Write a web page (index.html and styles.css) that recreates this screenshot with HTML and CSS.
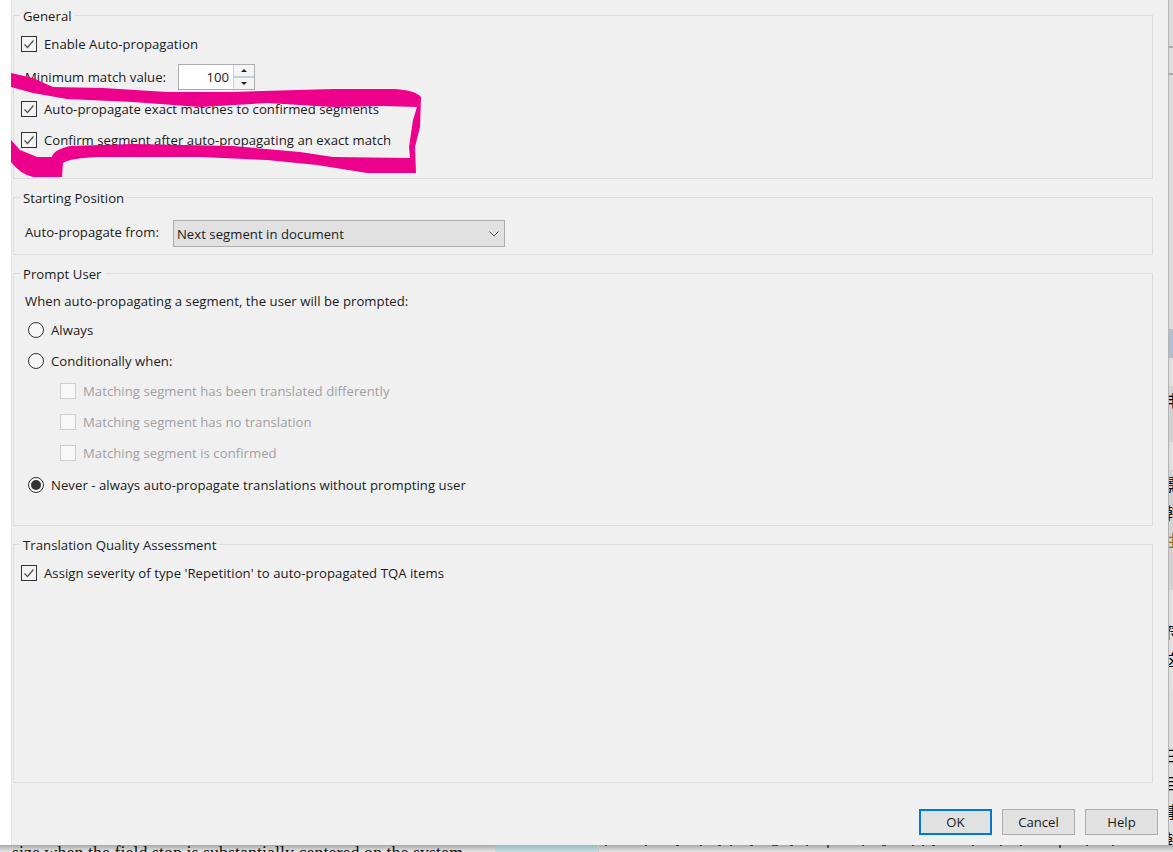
FILE: index.html
```html
<!DOCTYPE html>
<html>
<head>
<meta charset="utf-8">
<title>Auto-propagation</title>
<link rel="stylesheet" href="styles.css">
</head>
<body>

<svg width="0" height="0" class="iconDefs">
	<symbol id="tick" viewBox="0 0 14 14">
		<polyline points="2.5,7.5 5.5,10.5 11.5,3.5" fill="none" stroke="#555" stroke-width="1.3"/>
	</symbol>
</svg>

<div class="topArea">
	<div class="dialog">

		<fieldset class="group groupGeneral">
			<legend>General</legend>
			<div class="row rowFirst"><span class="check"><svg width="14" height="14"><use href="#tick"/></svg></span>Enable Auto-propagation</div>
			<div class="row rowSpin">
				<span class="fieldLabel">Minimum match value:</span>
				<span class="spinner">
					<span class="spinValue">100</span>
					<span class="spinButtons">
						<span class="spinUp"></span>
						<span class="spinDown"></span>
					</span>
				</span>
			</div>
			<div class="row rowAfterSpin"><span class="check"><svg width="14" height="14"><use href="#tick"/></svg></span>Auto-propagate exact matches to confirmed segments</div>
			<div class="row"><span class="check"><svg width="14" height="14"><use href="#tick"/></svg></span>Confirm segment after auto-propagating an exact match</div>
		</fieldset>

		<fieldset class="group groupStart">
			<legend>Starting Position</legend>
			<div class="row rowSelect">
				<span class="fieldLabel selectLabel">Auto-propagate from:</span>
				<span class="select">
					Next segment in document
					<svg class="selectArrow" width="10" height="6" viewBox="0 0 10 6"><polyline points="0.5,0.5 5,5 9.5,0.5" fill="none" stroke="#555" stroke-width="1"/></svg>
				</span>
			</div>
		</fieldset>

		<fieldset class="group groupPrompt">
			<legend>Prompt User</legend>
			<div class="row rowIntro"><span class="fieldLabel">When auto-propagating a segment, the user will be prompted:</span></div>
			<div class="row rowRadio1 radioRow"><span class="radio"></span>Always</div>
			<div class="row radioRow"><span class="radio"></span>Conditionally when:</div>
			<div class="row subRow rowSub1"><span class="check checkOff"></span>Matching segment has been translated differently</div>
			<div class="row subRow"><span class="check checkOff"></span>Matching segment has no translation</div>
			<div class="row subRow"><span class="check checkOff"></span>Matching segment is confirmed</div>
			<div class="row radioRow rowNever"><span class="radio radioOn"></span>Never - always auto-propagate translations without prompting user</div>
		</fieldset>

		<fieldset class="group groupTqa">
			<legend>Translation Quality Assessment</legend>
			<div class="row rowFirst"><span class="check"><svg width="14" height="14"><use href="#tick"/></svg></span>Assign severity of type 'Repetition' to auto-propagated TQA items</div>
		</fieldset>

		<div class="buttonBar">
			<button type="button" class="btn btnDefault">OK</button>
			<button type="button" class="btn">Cancel</button>
			<button type="button" class="btn">Help</button>
		</div>
	</div>

	<!-- sliver of the document window behind the dialog -->
	<div class="sideStrip">
		<div class="band bandA"></div>
		<div class="band bandLine"></div>
		<div class="band bandB"></div>
		<div class="band bandBlue"></div>
		<div class="band bandC"></div>
		<div class="band bandD"><span class="glyph">申</span></div>
		<div class="band bandE"></div>
		<div class="band bandF"><span class="glyph">影</span><span class="glyph">韩</span><span class="glyph glyphOrange">由</span></div>
		<div class="band bandG"><span class="glyph">符</span><span class="glyph">囟</span></div>
		<div class="band bandH"><span class="glyph">三</span><span class="glyph">目</span><span class="glyph">事</span><span class="glyph">韩</span></div>
	</div>
</div>

<div class="bottomStrip">
	<div class="bottomText">size when the field stop is substantially centered on the system</div>
	<div class="tealBlock"></div>
	<svg class="bottomMarks" width="570" height="3">
		<path d="M6 0v1M45 0h2M76 0h3M100 0h2M118 0h3M130 0h2M150 0h3M172 0h6M190 0h3M206 0h2M228 0v3M262 0h2M282 0h4M312 0h2M322 0h2M332 0h3M372 0h2M400 0h2M420 0h2M460 0v3M486 0h2M512 0h2" stroke="#222" stroke-width="1.4" fill="none"/>
	</svg>
</div>

<!-- hand-drawn highlight -->
<svg class="scribble" width="1173" height="852">
	<path d="M11 73 L33 78 L53 87 L103 88 L167 92 L233 92 L333 89 L393 89 Q415 90 421 97 L420 127 L415 147 L416 173 L367 173 L317 165 L267 160 L200 157 L100 157 Q70 158 63 163 L62 177 L33 177 Q20 174 11 162 L11 140 L20 150 L37 157 L52 157 Q53 150 70 146 L133 144 L233 146 L300 152 L333 157 L410 158 L409 147 L413 120 L417 107 L383 106 L333 107 L267 103 L200 107 L133 102 L67 99 L33 93 L11 87 Z" fill="#ec008c"/>
</svg>

</body>
</html>
```

FILE: styles.css
```css
html, body {
	margin: 0;
	padding: 0;
}

body {
	position: relative;
	width: 1173px;
	height: 852px;
	overflow: hidden;
	background: #fff;
	font-family: "Open Sans", "Noto Sans", sans-serif;
	font-size: 13.15px;
	letter-spacing: 0.04px;
	color: #1a1a1a;
}

.iconDefs {
	position: absolute;
}

.topArea {
	display: flex;
	height: 845px;
	padding-left: 11px;
}

.dialog {
	box-sizing: border-box;
	width: 1157px;
	height: 845px;
	padding: 7px 10px 10px 2px;
	background: #f0f0f0;
	border-left: 1px solid #e4e4e4;
}

.group {
	box-sizing: border-box;
	width: 1140px;
	margin: 0 0 10px -1px;
	padding: 0 6px;
	border: 1px solid #dcdcdc;
	min-width: 0;
}

.group legend {
	padding: 0 3px;
	height: 17px;
	line-height: 19px;
}

.groupGeneral { height: 172px; }
.groupStart { height: 66px; }
.groupPrompt { height: 261px; }
.groupTqa { height: 247px; margin-bottom: 0; }

.row {
	display: flex;
	align-items: center;
	height: 20px;
	margin-top: 11px;
	margin-left: 1px;
}

.rowFirst { margin-top: 10px; }
.rowSpin { height: 27px; margin-top: 9px; }
.rowAfterSpin { margin-top: 9px; }
.rowSelect { height: 27px; margin-top: 14px; }
.rowIntro { margin-top: 9px; }
.rowRadio1 { margin-top: 9px; }
.rowSub1 { margin-top: 10px; }
.rowNever { margin-top: 12px; }

.fieldLabel {
	margin-left: 4px;
}

.selectLabel {
	margin-top: -3px;
}

.check {
	box-sizing: border-box;
	display: flex;
	flex: none;
	width: 16px;
	height: 16px;
	margin-right: 7px;
	border: 1px solid #333;
	background: #f4f4f4;
}

.checkOff {
	border-color: #cfcfcf;
	background: #f8f8f8;
}

.subRow {
	margin-left: 40px;
	color: #a0a0a0;
}

.radioRow {
	margin-left: 8px;
}

.radio {
	box-sizing: border-box;
	display: flex;
	align-items: center;
	justify-content: center;
	flex: none;
	width: 16px;
	height: 16px;
	margin-right: 7px;
	border: 1px solid #333;
	border-radius: 50%;
	background: #f6f6f6;
}

.radioOn::after {
	content: "";
	width: 10px;
	height: 10px;
	border-radius: 50%;
	background: #333;
}

.spinner {
	box-sizing: border-box;
	display: flex;
	width: 77px;
	height: 26px;
	margin-left: 12px;
	border: 1px solid #adadad;
	background: #fff;
}

.spinValue {
	flex: 1;
	padding-right: 4px;
	text-align: right;
	line-height: 24px;
}

.spinButtons {
	display: flex;
	flex-direction: column;
	width: 20px;
	background: #f0f0f0;
	border-left: 1px solid #d0d0d0;
}

.spinUp, .spinDown {
	flex: 1;
	position: relative;
	background: #f4f4f4;
}

.spinUp {
	border-bottom: 2px solid #c4ced6;
}

.spinUp::after, .spinDown::after {
	content: "";
	position: absolute;
	left: 7px;
	top: 4px;
	border-left: 3px solid transparent;
	border-right: 3px solid transparent;
}

.spinUp::after { border-bottom: 3px solid #222; }
.spinDown::after { border-top: 3px solid #222; }

.select {
	box-sizing: border-box;
	display: flex;
	align-items: center;
	justify-content: space-between;
	width: 332px;
	height: 27px;
	margin-left: 14px;
	padding: 1px 5px 0 3px;
	border: 1px solid #adadad;
	background: #e1e1e1;
}

.buttonBar {
	display: flex;
	justify-content: flex-end;
	gap: 10px;
	margin-top: 26px;
}

.btn {
	box-sizing: border-box;
	width: 73px;
	height: 26px;
	padding: 0;
	border: 1px solid #adadad;
	background: #e1e1e1;
	font-family: inherit;
	font-size: inherit;
	color: #1a1a1a;
}

.btnDefault {
	border: 2px solid #0078d7;
}

.sideStrip {
	box-sizing: border-box;
	width: 5px;
	height: 845px;
	overflow: hidden;
	background: #dedede;
	border-left: 1px solid #b4b4b4;
}

.band {
	display: flex;
	flex-direction: column;
	overflow: hidden;
}

.bandA { height: 46px; background: #dcdcdc; }
.bandLine { height: 2px; background: #a8a8a8; margin-bottom: 25px; }
.bandB { height: 256px; background: #dcdcdc; border-top: 2px solid #a8a8a8; box-sizing: border-box; }
.bandBlue { height: 29px; background: #a9c1d3; }
.bandC { height: 28px; background: #e0e0e0; }
.bandD { height: 56px; background: #d2d2d2; }
.bandE { height: 28px; background: #e0e0e0; }
.bandF { height: 120px; background: #d2d2d2; }
.bandG { height: 100px; background: #e0e0e0; padding-top: 27px; box-sizing: border-box; }
.bandH { height: 155px; background: #dedede; padding-top: 51px; box-sizing: border-box; }

.glyph {
	display: block;
	flex: none;
	width: 16px;
	height: 16px;
	margin: 6px 0 6px -4px;
	line-height: 16px;
	font-family: "Noto Sans CJK SC", sans-serif;
	font-size: 16px;
	color: #000;
}

.glyphOrange {
	color: #a86a10;
}

.bottomStrip {
	position: relative;
	display: flex;
	height: 7px;
	overflow: hidden;
	background: linear-gradient(#a8a8a8, #e8e8e8);
}

.bottomText {
	box-sizing: border-box;
	flex: none;
	width: 495px;
	padding-left: 12px;
	white-space: nowrap;
	font-family: "Liberation Serif", serif;
	font-size: 18px;
	line-height: 17px;
	letter-spacing: 0;
	color: #111;
}

.tealBlock {
	width: 103px;
	background: linear-gradient(#9db8b8, #c4e0e0);
	border-right: 1px solid #c8c8c8;
}

.bottomMarks {
	position: absolute;
	left: 600px;
	top: 0;
}

.scribble {
	position: absolute;
	left: 0;
	top: 0;
	pointer-events: none;
}
```
